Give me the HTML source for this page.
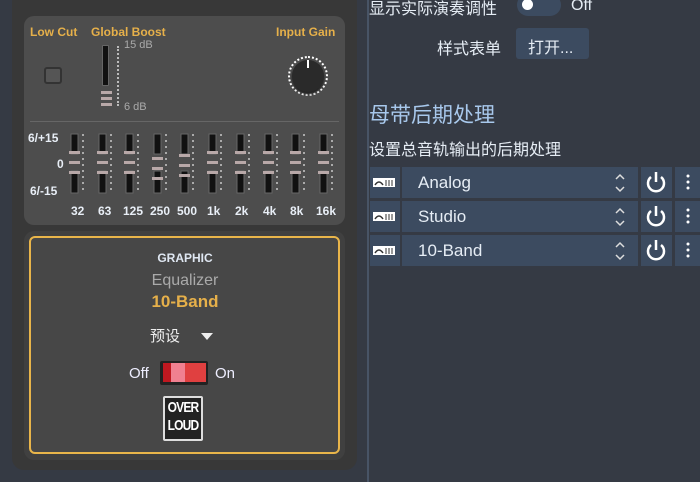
<!DOCTYPE html><html><head><meta charset="utf-8"><style>
*{margin:0;padding:0;box-sizing:border-box}
body{width:700px;height:482px;background:#353a44;position:relative;overflow:hidden;font-family:"Liberation Sans","Noto Sans CJK SC",sans-serif}
.a{position:absolute}
.y{color:#e6b04a;font-weight:bold;font-size:12px}
.w{color:#e8eef6;font-weight:bold;font-size:12px}
.slot{position:absolute;width:7px;background:#111;border:1px solid #666;border-radius:1px}
.h{position:absolute;width:11px;height:3px;background:#b8a8a8}
.row{position:absolute;left:370px;height:31px;width:330px}
.c{position:absolute;top:0;height:31px;background:#3c4b60}
.t{color:#e6edf5;font-size:17px;position:absolute;top:6px}
</style></head><body>
<div class="a" style="left:12px;top:-10px;width:345px;height:480px;background:#383838;border-radius:12px"></div>
<div class="a" style="left:24px;top:16px;width:321px;height:209px;background:#4d4d4d;border-radius:10px"></div>
<div class="a y" style="left:30px;top:25px">Low Cut</div>
<div class="a y" style="left:91px;top:25px">Global Boost</div>
<div class="a y" style="left:276px;top:25px">Input Gain</div>
<div class="a" style="left:44px;top:67px;width:18px;height:17px;border:2px solid #333;background:#555;border-radius:3px"></div>
<div class="slot" style="left:102px;top:45px;height:41px"></div>
<div class="h" style="left:101px;top:91px"></div><div class="h" style="left:101px;top:97px"></div><div class="h" style="left:101px;top:103px"></div>
<div class="a" style="left:117px;top:46px;height:60px;border-left:2px dotted #bbb"></div>
<div class="a" style="left:124px;top:39px;color:#aaa;font-size:11px">15 dB</div>
<div class="a" style="left:124px;top:101px;color:#aaa;font-size:11px">6 dB</div>
<div class="a" style="left:288px;top:56px;width:40px;height:40px;border:2px dotted #fff;border-radius:50%"></div>
<div class="a" style="left:292px;top:60px;width:32px;height:32px;background:#2a2a2a;border-radius:50%;box-shadow:0 2px 2px #222"></div>
<div class="a" style="left:307px;top:60px;width:2px;height:8px;background:#fff"></div>
<div class="a" style="left:30px;top:121px;width:309px;height:1px;background:#666"></div>
<div class="a w" style="left:28px;top:131px">6/+15</div>
<div class="a w" style="left:57px;top:157px">0</div>
<div class="a w" style="left:30px;top:184px">6/-15</div>
<div class="a w" style="left:0;top:204px;width:700px;font-size:12px">
<span class="a" style="left:71px">32</span><span class="a" style="left:98px">63</span><span class="a" style="left:123px">125</span><span class="a" style="left:150px">250</span><span class="a" style="left:177px">500</span><span class="a" style="left:207px">1k</span><span class="a" style="left:235px">2k</span><span class="a" style="left:263px">4k</span><span class="a" style="left:290px">8k</span><span class="a" style="left:316px">16k</span></div>
<div class="a" style="left:24px;top:231px;width:321px;height:229px;background:#404040;border-radius:10px"></div>
<div class="a" style="left:29px;top:236px;width:311px;height:218px;background:#474747;border:2px solid #e9b54a;border-radius:6px"></div>
<div class="a" style="left:0;width:370px;text-align:center;top:251px;color:#dfe7f2;font-weight:bold;font-size:12px">GRAPHIC</div>
<div class="a" style="left:0;width:370px;text-align:center;top:272px;color:#aaa;font-size:16px">Equalizer</div>
<div class="a" style="left:0;width:370px;text-align:center;top:292px;color:#e6b04a;font-weight:bold;font-size:17px">10-Band</div>
<div class="a" style="left:150px;top:325px;color:#eee;font-size:15px">预设</div>
<div class="a" style="left:201px;top:333px;border:6px solid transparent;border-top:7px solid #eee"></div>
<div class="a" style="left:129px;top:365px;color:#eef;font-size:15px">Off</div>
<div class="a" style="left:215px;top:365px;color:#eef;font-size:15px">On</div>
<div class="a" style="left:160px;top:361px;width:48px;height:24px;background:#222;border-radius:2px"></div>
<div class="a" style="left:163px;top:363px;width:43px;height:19px;background:#e04040"></div>
<div class="a" style="left:163px;top:363px;width:8px;height:19px;background:#c01820"></div>
<div class="a" style="left:171px;top:363px;width:14px;height:19px;background:#f08090"></div>
<div class="a" style="left:163px;top:396px;width:40px;height:45px;background:#222;border:2px solid #ddd;border-radius:2px"></div>
<div class="a" style="left:163px;top:399px;width:40px;color:#fff;font-weight:bold;font-size:15px;line-height:18px;text-align:center;letter-spacing:-1px;transform:scaleX(0.8)">OVER<br>LOUD</div>
<div class="a" style="left:367px;top:0;width:2px;height:482px;background:#485466"></div>
<div class="a" style="left:369px;top:-5px;color:#e6edf5;font-size:16px">显示实际演奏调性</div>
<div class="a" style="left:517px;top:-6px;width:44px;height:22px;background:#3c4b60;border-radius:11px"></div>
<div class="a" style="left:522px;top:-1px;width:11px;height:11px;background:#fff;border-radius:50%"></div>
<div class="a" style="left:571px;top:-3px;color:#e6edf5;font-size:16px">Off</div>
<div class="a" style="left:437px;top:35px;color:#e6edf5;font-size:16px">样式表单</div>
<div class="a" style="left:516px;top:28px;width:73px;height:31px;background:#3c4b60;border-radius:3px;color:#e6edf5;font-size:16px;padding:6px 0 0 12px">打开...</div>
<div class="a" style="left:369px;top:99px;color:#a8c8ec;font-size:21px">母带后期处理</div>
<div class="a" style="left:369px;top:136px;color:#e6edf5;font-size:16px">设置总音轨输出的后期处理</div>
<div class="row" style="top:167px"><div class="c" style="left:0;width:30px"></div><div class="c" style="left:32px;width:236px"></div><div class="c" style="left:271px;width:31px"></div><div class="c" style="left:305px;width:25px"></div><span class="t" style="left:48px">Analog</span></div>
<div class="row" style="top:201px"><div class="c" style="left:0;width:30px"></div><div class="c" style="left:32px;width:236px"></div><div class="c" style="left:271px;width:31px"></div><div class="c" style="left:305px;width:25px"></div><span class="t" style="left:48px">Studio</span></div>
<div class="row" style="top:235px"><div class="c" style="left:0;width:30px"></div><div class="c" style="left:32px;width:236px"></div><div class="c" style="left:271px;width:31px"></div><div class="c" style="left:305px;width:25px"></div><span class="t" style="left:48px">10-Band</span></div>
<svg class="a" style="left:370px;top:167px" width="330" height="100">
<g id="ic"><rect x="3" y="11" width="22" height="9" fill="#fff"/><path d="M5 18 q4 -6 8 0" stroke="#333" stroke-width="1.5" fill="none"/><path d="M16 13v6M19 13v6M22 13v6" stroke="#333" stroke-width="1"/>
<path d="M246 12l4 -4 4 4M246 20l4 4 4 -4" stroke="#ddd" stroke-width="1.5" fill="none"/>
<path d="M281 10a8 8 0 1 0 10 0" stroke="#fff" stroke-width="2.5" fill="none"/><line x1="286" y1="5" x2="286" y2="15" stroke="#fff" stroke-width="2.5"/>
<circle cx="318" cy="9" r="1.5" fill="#fff"/><circle cx="318" cy="15" r="1.5" fill="#fff"/><circle cx="318" cy="21" r="1.5" fill="#fff"/></g>
<use href="#ic" y="34"/><use href="#ic" y="68"/>
</svg>
<svg class="a" style="left:0;top:0" width="360" height="230">
<g id="s" fill="#111" stroke="#666"><rect x="71" y="134" width="7" height="20"/><rect x="71" y="171" width="7" height="22"/></g>
<g id="sh" fill="#b8a8a8"><rect x="69" y="151" width="11" height="3"/><rect x="69" y="161" width="11" height="3"/><rect x="69" y="171" width="11" height="3"/></g>
<use href="#s" x="28"/><use href="#sh" x="28"/><use href="#s" x="55"/><use href="#sh" x="55"/><use href="#s" x="83"/><use href="#sh" x="83" y="6"/><use href="#s" x="110"/><use href="#sh" x="110" y="3"/><use href="#s" x="138"/><use href="#sh" x="138"/><use href="#s" x="166"/><use href="#sh" x="166"/><use href="#s" x="194"/><use href="#sh" x="194"/><use href="#s" x="221"/><use href="#sh" x="221"/><use href="#s" x="249"/><use href="#sh" x="249"/>
<g stroke="#aaa" stroke-width="2" stroke-dasharray="2 4"><line x1="83" y1="134" x2="83" y2="194"/><line x1="111" y1="134" x2="111" y2="194"/><line x1="138" y1="134" x2="138" y2="194"/><line x1="166" y1="134" x2="166" y2="194"/><line x1="193" y1="134" x2="193" y2="194"/><line x1="221" y1="134" x2="221" y2="194"/><line x1="249" y1="134" x2="249" y2="194"/><line x1="277" y1="134" x2="277" y2="194"/><line x1="304" y1="134" x2="304" y2="194"/><line x1="332" y1="134" x2="332" y2="194"/></g>
</svg>
</body></html>
